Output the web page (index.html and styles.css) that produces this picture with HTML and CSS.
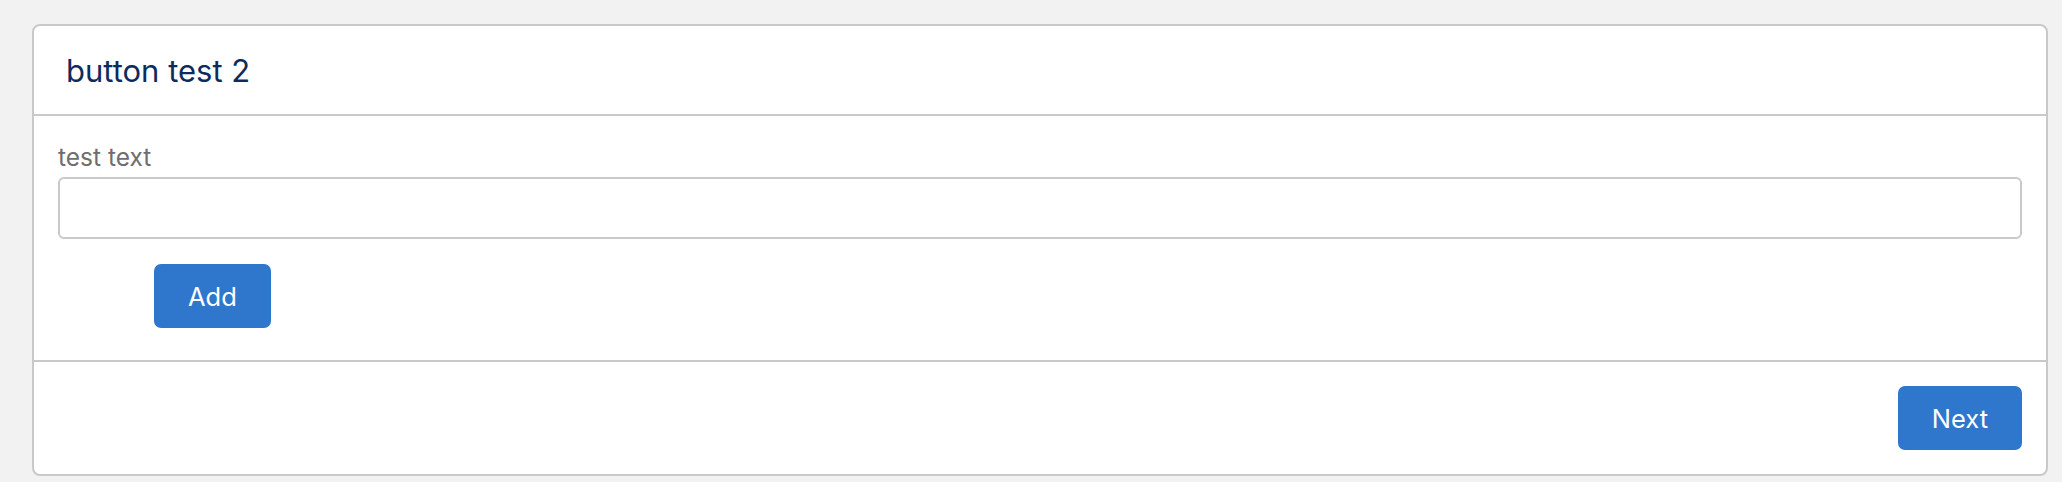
FILE: index.html
```html
<!DOCTYPE html>
<html>
<head>
<meta charset="utf-8">
<link rel="stylesheet" href="styles.css">
</head>
<body>
<div class="page">
  <div class="card">
    <div class="card-header">
      <h2 class="title">button test 2</h2>
    </div>
    <div class="card-body">
      <label class="label" for="t">test text</label>
      <input class="input" id="t" type="text">
      <div class="actions">
        <button class="btn">Add</button>
      </div>
    </div>
    <div class="card-footer">
      <button class="btn">Next</button>
    </div>
  </div>
</div>
</body>
</html>
```
FILE: styles.css
```css
html, body {
  margin: 0;
  padding: 0;
  background: #f2f2f2;
  font-family: Inter, "Noto Sans", sans-serif;
}
.page {
  padding: 24px 14px 6px 32px;
}
.card {
  background: #fff;
  border: 2px solid #c9c9c9;
  border-radius: 8px;
  display: flex;
  flex-direction: column;
}
.card-header {
  height: 88px;
  display: flex;
  align-items: center;
  padding: 0 32px;
  border-bottom: 2px solid #c9c9c9;
}
.title {
  margin: 0;
  font-size: 31px;
  font-weight: 400;
  color: #0f2b5c;
}
.card-body {
  padding: 24px 24px 32px;
  display: flex;
  flex-direction: column;
  border-bottom: 2px solid #c9c9c9;
}
.label {
  font-size: 24.5px;
  color: #6e6e6e;
  line-height: 34px;
  margin-bottom: 3px;
}
.input {
  box-sizing: border-box;
  height: 62px;
  border: 2px solid #c9c9c9;
  border-radius: 6px;
  margin: 0;
  padding: 0 16px;
  font: inherit;
}
.actions {
  display: flex;
  padding-left: 96px;
  margin-top: 25px;
}
.btn {
  height: 64px;
  padding: 0 34px;
  border: none;
  border-radius: 7px;
  background: #2f77cc;
  color: #fff;
  font-family: inherit;
  font-size: 25.5px;
  font-weight: 400;
}
.card-footer {
  display: flex;
  justify-content: flex-end;
  padding: 24px;
}
```
